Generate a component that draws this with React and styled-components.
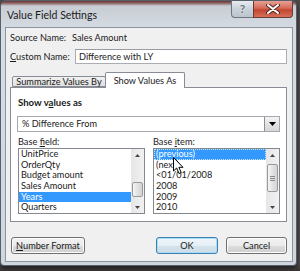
import styled, { createGlobalStyle } from "styled-components";

const GlobalStyle = createGlobalStyle`
  html, body { margin: 0; padding: 0; }
  body {
    background: #4a4545;
    font-family: Lato, "Open Sans", sans-serif;
    color: #1a1a1a;
  }
`;

const baseFields = ["UnitPrice", "OrderQty", "Budget amount", "Sales Amount", "Years", "Quarters"];
const baseItems = ["(previous)", "(next)", "<01/01/2008", "2008", "2009", "2010"];

export default function App() {
  return (
    <Stage>
      <GlobalStyle />
      <Window>
        <TitleBar>
          <Title>Value Field Settings</Title>
          <Captions>
            <HelpButton>?</HelpButton>
            <CloseButton>
              <svg width="14" height="10" viewBox="0 0 14 10">
                <path d="M2 1 L12 9 M12 1 L2 9" stroke="#5a2a24" strokeWidth="4" strokeLinecap="round" />
                <path d="M2 1 L12 9 M12 1 L2 9" stroke="#fff" strokeWidth="2" strokeLinecap="round" />
              </svg>
            </CloseButton>
          </Captions>
        </TitleBar>
        <Client>
          <FieldRow $height={18}>
            <Label $width={62}>Source Name:</Label>
            <span>Sales Amount</span>
          </FieldRow>
          <FieldRow $height={15} $top={3}>
            <Label $width={65}><u>C</u>ustom Name:</Label>
            <TextBox>Difference with LY</TextBox>
          </FieldRow>
          <TabStrip>
            <Tab $width={94}>Summarize Values By</Tab>
            <Tab $width={80} $active>Show Values As</Tab>
          </TabStrip>
          <Panel>
            <Heading>Show v<u>a</u>lues as</Heading>
            <Combo>
              <ComboText>% Difference From</ComboText>
              <ComboArrow>
                <svg width="7" height="4" viewBox="0 0 7 4"><path d="M0 0 H7 L3.5 4 Z" fill="#000" /></svg>
              </ComboArrow>
            </Combo>
            <Columns>
              <SmallLabel>Base <u>f</u>ield:</SmallLabel>
              <SmallLabel>Base <u>i</u>tem:</SmallLabel>
              <ListBox>
                <Items>
                  {baseFields.map((f) => (
                    <Item key={f} $selected={f === "Years"}>{f}</Item>
                  ))}
                </Items>
                <ScrollBar thumbTop={21} thumbHeight={15} />
              </ListBox>
              <ListBox>
                <Items>
                  {baseItems.map((f) => (
                    <Item key={f} $selected={f === "(previous)"} $focus={f === "(previous)"}>{f}</Item>
                  ))}
                </Items>
                <ScrollBar thumbTop={3} thumbHeight={28} grip />
              </ListBox>
            </Columns>
          </Panel>
          <ButtonRow>
            <Button $width={74}><u>N</u>umber Format</Button>
            <Spacer />
            <Button $width={62} $default>OK</Button>
            <Button $width={61}>Cancel</Button>
          </ButtonRow>
        </Client>
      </Window>
      <Cursor width="12" height="18" viewBox="0 0 12 18">
        <path d="M0.5 0.5 L0.5 14 L3.6 11 L6 16.5 L8.2 15.5 L5.9 10.3 L10 10.3 Z" fill="#fff" stroke="#000" strokeWidth="1" strokeLinejoin="round" />
      </Cursor>
    </Stage>
  );
}

function ScrollBar({ thumbTop, thumbHeight, grip }) {
  return (
    <Track>
      <ArrowCell>
        <svg width="5" height="3" viewBox="0 0 5 3"><path d="M0 3 H5 L2.5 0 Z" fill="#444" /></svg>
      </ArrowCell>
      <Thumb $top={thumbTop} $height={thumbHeight}>
        {grip && (
          <svg width="5" height="5" viewBox="0 0 5 5">
            <path d="M0 0.5 H5 M0 2.5 H5 M0 4.5 H5" stroke="#8a8a8a" strokeWidth="1" />
          </svg>
        )}
      </Thumb>
      <Spacer />
      <ArrowCell>
        <svg width="5" height="3" viewBox="0 0 5 3"><path d="M0 0 H5 L2.5 3 Z" fill="#444" /></svg>
      </ArrowCell>
    </Track>
  );
}

const Stage = styled.div`
  position: relative;
  width: 300px;
  height: 271px;
  overflow: hidden;
  background: linear-gradient(to bottom, #4f4a4a 0, #4f4a4a 264px, #3a3636 271px);
`;

const Window = styled.div`
  width: 297px;
  height: 266px;
  box-sizing: border-box;
  border: 1px solid #56606b;
  border-radius: 6px 6px 4px 4px;
  padding: 0 3px 3px 4px;
  display: flex;
  flex-direction: column;
  background: linear-gradient(to bottom, #6e3434 0, #8a6060 2px, #c8cdd4 5px, #d7dde4 30px, #cfd6de 100%);
  box-shadow: 0 2px 4px rgba(0, 0, 0, 0.6);
`;

const TitleBar = styled.div`
  height: 26px;
  display: flex;
  align-items: flex-start;
`;

const Title = styled.div`
  margin: 7px 0 0 2px;
  font-size: 10.5px;
  line-height: 14px;
  color: #1a1a1a;
`;

const Captions = styled.div`
  margin-left: auto;
  display: flex;
  height: 17px;
`;

const HelpButton = styled.div`
  width: 22px;
  box-sizing: border-box;
  border: 1px solid #6d7682;
  border-top: none;
  border-right: none;
  border-radius: 0 0 0 4px;
  background: linear-gradient(to bottom, #e8ecf0, #c9d1da 50%, #bcc5cf);
  color: #6b7682;
  font-size: 12px;
  font-weight: bold;
  line-height: 16px;
  text-align: center;
  text-shadow: 0 0 2px #fff;
`;

const CloseButton = styled.div`
  width: 40px;
  box-sizing: border-box;
  border: 1px solid #6b3a34;
  border-top: none;
  border-radius: 0 0 4px 0;
  background: linear-gradient(to bottom, #e6a193, #d46a58 45%, #c24530 55%, #d6705a);
  display: flex;
  align-items: center;
  justify-content: center;
`;

const Client = styled.div`
  flex: 1;
  display: flex;
  flex-direction: column;
  padding: 0 5px 0 4px;
  border: 1px solid #8a95a2;
  background: #f0f0f0;
  font-size: 9.2px;
`;

const FieldRow = styled.div`
  display: flex;
  align-items: center;
  height: ${(p) => p.$height}px;
  margin-top: ${(p) => p.$top || 0}px;
`;

const Label = styled.span`
  width: ${(p) => p.$width}px;
  flex: none;
  white-space: nowrap;
`;

const TextBox = styled.div`
  flex: 1;
  height: 15px;
  box-sizing: border-box;
  border: 1px solid #abadb3;
  border-top-color: #9a9ca3;
  background: #fff;
  padding-left: 3px;
  line-height: 13px;
`;

const TabStrip = styled.div`
  margin-top: 8px;
  height: 15px;
  padding-left: 2px;
  display: flex;
  align-items: flex-end;
  position: relative;
  z-index: 1;
`;

const Tab = styled.div`
  width: ${(p) => p.$width}px;
  box-sizing: border-box;
  height: ${(p) => (p.$active ? 16 : 11)}px;
  margin-bottom: ${(p) => (p.$active ? -1 : 0)}px;
  margin-left: ${(p) => (p.$active ? -1 : 0)}px;
  border: 1px solid #898c95;
  border-bottom: ${(p) => (p.$active ? "none" : "1px solid #898c95")};
  border-radius: 2px 2px 0 0;
  background: ${(p) => (p.$active ? "#fff" : "linear-gradient(to bottom, #f2f2f2, #e0e0e0)")};
  line-height: ${(p) => (p.$active ? 15 : 10)}px;
  text-align: center;
  white-space: nowrap;
`;

const Panel = styled.div`
  height: 135px;
  box-sizing: border-box;
  border: 1px solid #898c95;
  background: #fff;
  padding: 0 6px;
  display: flex;
  flex-direction: column;
`;

const Heading = styled.div`
  margin-top: 9px;
  height: 12px;
  line-height: 12px;
  padding-left: 1px;
  font-weight: bold;
  font-size: 9.6px;
`;

const Combo = styled.div`
  margin-top: 7px;
  height: 16px;
  box-sizing: border-box;
  border: 1px solid #a4a9b0;
  display: flex;
  background: #fff;
`;

const ComboText = styled.div`
  flex: 1;
  padding-left: 4px;
  line-height: 14px;
`;

const ComboArrow = styled.div`
  width: 15px;
  box-sizing: border-box;
  border-left: 1px solid #8c8f94;
  background: linear-gradient(to bottom, #f4f4f4, #e3e3e3 50%, #d6d6d6);
  display: flex;
  align-items: center;
  justify-content: center;
`;

const Columns = styled.div`
  margin-top: 4px;
  padding-left: 1px;
  display: grid;
  grid-template-columns: 127px 127px;
  grid-template-rows: 12px 66px;
  column-gap: 8px;
`;

const SmallLabel = styled.div`
  line-height: 12px;
`;

const ListBox = styled.div`
  box-sizing: border-box;
  border: 1px solid #828790;
  background: #fff;
  display: flex;
`;

const Items = styled.div`
  flex: 1;
  display: grid;
  grid-template-rows: repeat(6, 1fr);
`;

const Item = styled.div`
  padding-left: 2px;
  line-height: 10.6px;
  white-space: nowrap;
  overflow: hidden;
  background: ${(p) => (p.$selected ? "#3399ff" : "transparent")};
  color: ${(p) => (p.$selected ? "#fff" : "#1a1a1a")};
  outline: ${(p) => (p.$focus ? "1px dotted #cfe4ff" : "none")};
  outline-offset: -1px;
`;

const Track = styled.div`
  width: 13px;
  flex: none;
  display: flex;
  flex-direction: column;
  background: linear-gradient(to right, #e6e6e6, #f1f1f1);
`;

const ArrowCell = styled.div`
  height: 12px;
  display: flex;
  align-items: center;
  justify-content: center;
`;

const Thumb = styled.div`
  margin: ${(p) => p.$top}px 1px 0;
  height: ${(p) => p.$height}px;
  box-sizing: border-box;
  border: 1px solid #9a9a9a;
  border-radius: 2px;
  background: linear-gradient(to right, #f5f5f5, #e2e2e2 50%, #d4d4d4);
  display: flex;
  align-items: center;
  justify-content: center;
`;

const Spacer = styled.div`
  flex: 1;
`;

const ButtonRow = styled.div`
  margin-top: 15px;
  height: 17px;
  padding-left: 1px;
  display: flex;
  gap: 8px;
`;

const Button = styled.div`
  width: ${(p) => p.$width}px;
  box-sizing: border-box;
  border: 1px solid ${(p) => (p.$default ? "#3c7fb1" : "#707070")};
  border-radius: 3px;
  background: ${(p) =>
    p.$default
      ? "linear-gradient(to bottom, #f0f6fa, #e4eef5 50%, #d4e2ec 51%, #cfdde8)"
      : "linear-gradient(to bottom, #f2f2f2, #ebebeb 50%, #dddddd 51%, #cfcfcf)"};
  box-shadow: inset 0 0 0 1px ${(p) => (p.$default ? "#a9dcf5" : "#fcfcfc")};
  text-align: center;
  line-height: 15px;
`;

const Cursor = styled.svg`
  position: absolute;
  left: 173px;
  top: 157px;
`;
